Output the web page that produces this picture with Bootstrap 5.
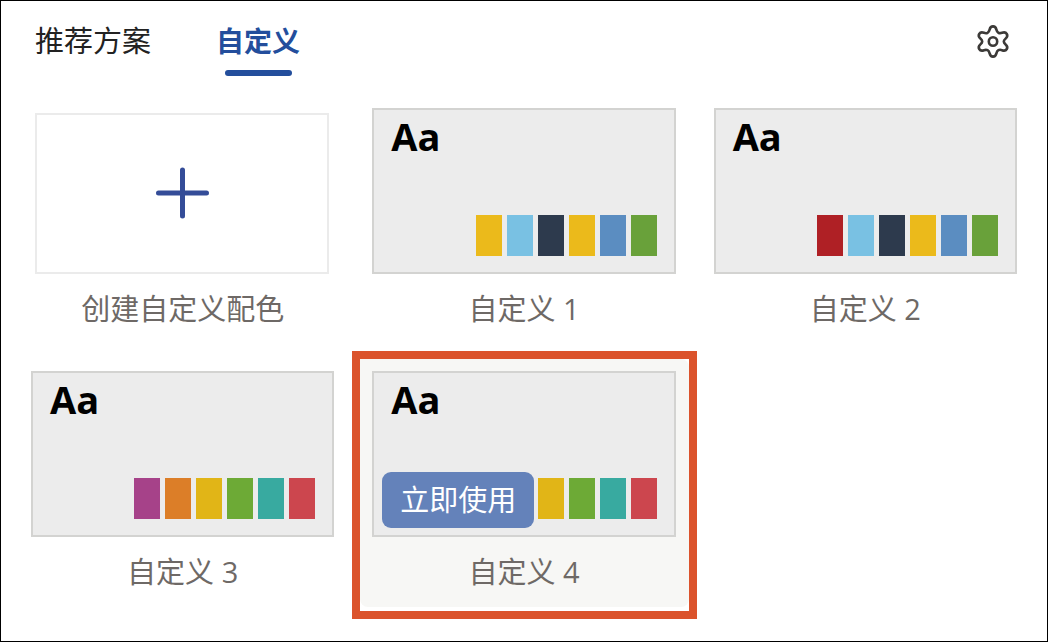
<!DOCTYPE html>
<html lang="zh-CN">
<head>
<meta charset="utf-8">
<meta name="viewport" content="width=device-width, initial-scale=1">
<title>自定义配色</title>
<link href="https://cdn.jsdelivr.net/npm/bootstrap@5.3.0/dist/css/bootstrap.min.css" rel="stylesheet">
<style>
  body { font-family: "Open Sans", "Noto Sans CJK SC", sans-serif; font-size: 29px; color: #222; background: #fff; }
  .palette-panel { border: 1px solid #000; min-height: 100vh; padding: 0 30px; }
  .panel-head { padding: 20px 4px 0; height: 80px; }
  .scheme-tabs { gap: 65px; }
  .scheme-tab { border: 0; background: none; padding: 0; font-size: 29px; line-height: 40px; color: #222; }
  .scheme-tab.active { color: #234e9c; font-weight: 700; font-size: 28px; }
  .scheme-tab.active::after { content: ""; display: block; width: 67px; height: 6px; margin: 9px auto 0; border-radius: 3px; background: #234e9c; }
  .gear-btn { border: 0; background: none; padding: 0; line-height: 0; color: #3c3a38; margin-top: 3px; }
  .palette-grid { display: grid; grid-template-columns: repeat(3, minmax(0, 1fr)); gap: 27px 38px; padding-top: 27px; }
  .palette-tile { height: 166px; background: #ececec; border: 2px solid #d3d3d1; padding: 4px 17px 16px; }
  .sample-text { font-weight: 700; font-size: 38px; line-height: 44px; color: #000; }
  .swatches { gap: 5px; }
  .swatch { width: 26px; height: 41px; }
  .palette-name { line-height: 70px; text-align: center; color: #6e6966; }
  .create-slot { padding: 5px 5px 0 4px; height: 166px; }
  .create-btn { border: 2px solid #ebebeb; background: #fff; color: #344c98; }
  .selected-item { isolation: isolate; }
  .selected-item::before { content: ""; position: absolute; z-index: -1; inset: -12px -13px 0 -12px; background: #f7f7f5; border-radius: 0 8px 8px 8px; }
  .selected-item::after { content: ""; position: absolute; inset: -20px -21px -12px -20px; border: 8px solid #db532c; pointer-events: none; }
  .apply-btn { left: 8px; bottom: 7px; width: 152px; height: 56px; border: 0; border-radius: 9px; padding: 0; background: #6482ba; color: #fff; font-size: 29px; line-height: 56px; }
</style>
</head>
<body>
<main class="palette-panel">
  <header class="panel-head d-flex justify-content-between align-items-start">
    <div class="scheme-tabs d-flex align-items-start" role="tablist">
      <button type="button" class="scheme-tab" role="tab" aria-selected="false">推荐方案</button>
      <button type="button" class="scheme-tab active" role="tab" aria-selected="true">自定义</button>
    </div>
    <button type="button" class="gear-btn" aria-label="设置">
      <svg width="40" height="36" viewBox="0 0 40 36" fill="none" stroke="currentColor" stroke-width="2.6" stroke-linejoin="round">
        <path d="M16.6 5.6C17.2 3.2 18.1 2.4 20 2.4S22.8 3.2 23.4 5.6C24.2 8.8 26.2 9.8 29 8.8C31.4 7.9 32.8 8.3 33.8 10S34.5 12.9 32.6 14.6C30.2 16.7 30.2 18.3 32.6 20.4C34.5 22.1 34.8 23.3 33.8 25S31.4 27.1 29 26.2C26.2 25.2 24.2 26.2 23.4 29.4C22.8 31.8 21.9 32.6 20 32.6S17.2 31.8 16.6 29.4C15.8 26.2 13.8 25.2 11 26.2C8.6 27.1 7.2 26.7 6.2 25S5.5 22.1 7.4 20.4C9.8 18.3 9.8 16.7 7.4 14.6C5.5 12.9 5.2 11.7 6.2 10S8.6 7.9 11 8.8C13.8 9.8 15.8 8.8 16.6 5.6Z"/>
        <circle cx="20" cy="17.5" r="4.2"/>
      </svg>
    </button>
  </header>

  <section class="palette-grid" aria-label="自定义配色">
    <div>
      <div class="create-slot">
        <button type="button" class="create-btn w-100 h-100 p-0 d-flex justify-content-center align-items-center" aria-labelledby="create-name">
          <svg width="54" height="54" viewBox="0 0 54 54" stroke="currentColor" stroke-width="5" stroke-linecap="round"><path d="M27.5 3V49M3.500 26H51.5"/></svg>
        </button>
      </div>
      <div class="palette-name" id="create-name">创建自定义配色</div>
    </div>

    <div>
      <div class="palette-tile d-flex flex-column justify-content-between">
        <div class="sample-text">Aa</div>
        <div class="swatches d-flex justify-content-end">
          <span class="swatch" style="background:#ebba1b"></span><span class="swatch" style="background:#79c1e3"></span><span class="swatch" style="background:#2d3a4d"></span><span class="swatch" style="background:#ebba1b"></span><span class="swatch" style="background:#5b8dc1"></span><span class="swatch" style="background:#69a13a"></span>
        </div>
      </div>
      <div class="palette-name">自定义 1</div>
    </div>

    <div>
      <div class="palette-tile d-flex flex-column justify-content-between">
        <div class="sample-text">Aa</div>
        <div class="swatches d-flex justify-content-end">
          <span class="swatch" style="background:#af2025"></span><span class="swatch" style="background:#79c1e3"></span><span class="swatch" style="background:#2d3a4d"></span><span class="swatch" style="background:#ebba1b"></span><span class="swatch" style="background:#5b8dc1"></span><span class="swatch" style="background:#69a13a"></span>
        </div>
      </div>
      <div class="palette-name">自定义 2</div>
    </div>

    <div>
      <div class="palette-tile d-flex flex-column justify-content-between">
        <div class="sample-text">Aa</div>
        <div class="swatches d-flex justify-content-end">
          <span class="swatch" style="background:#a64289"></span><span class="swatch" style="background:#dc7e28"></span><span class="swatch" style="background:#e1b517"></span><span class="swatch" style="background:#6daa36"></span><span class="swatch" style="background:#38aaa0"></span><span class="swatch" style="background:#cc464e"></span>
        </div>
      </div>
      <div class="palette-name">自定义 3</div>
    </div>

    <div class="selected-item position-relative">
      <div class="palette-tile position-relative d-flex flex-column justify-content-between">
        <div class="sample-text">Aa</div>
        <div class="swatches d-flex justify-content-end">
          <span class="swatch" style="background:#a64289"></span><span class="swatch" style="background:#dc7e28"></span><span class="swatch" style="background:#e1b517"></span><span class="swatch" style="background:#6daa36"></span><span class="swatch" style="background:#38aaa0"></span><span class="swatch" style="background:#cc464e"></span>
        </div>
        <button type="button" class="apply-btn position-absolute">立即使用</button>
      </div>
      <div class="palette-name">自定义 4</div>
    </div>
  </section>
</main>
<script src="https://cdn.jsdelivr.net/npm/bootstrap@5.3.0/dist/js/bootstrap.bundle.min.js"></script>
</body>
</html>
